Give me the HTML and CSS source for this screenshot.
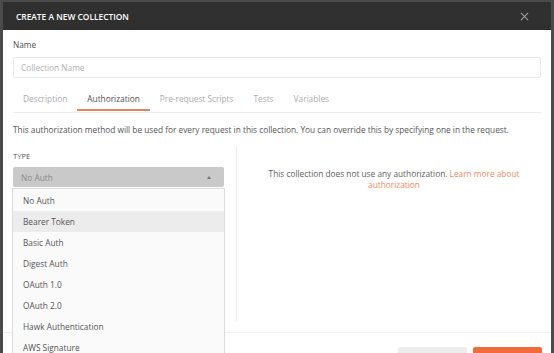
FILE: index.html
```html
<!DOCTYPE html>
<html lang="en">
<head>
    <meta charset="UTF-8">
    <title>Create a new collection</title>
    <link rel="stylesheet" href="styles.css">
</head>
<body>
    <div class="modal">
        <div class="modal-header">
            <div class="modal-title">CREATE A NEW COLLECTION</div>
            <svg class="modal-close" width="9" height="9" viewBox="0 0 10 10">
                <path d="M1 1 L9 9 M9 1 L1 9" stroke="#9a9a9a" stroke-width="1.3"/>
            </svg>
        </div>

        <div class="modal-body">
            <div class="field-label">Name</div>
            <div class="text-input">Collection Name</div>

            <div class="tabs">
                <div class="tab">Description</div>
                <div class="tab active">Authorization</div>
                <div class="tab">Pre-request Scripts</div>
                <div class="tab">Tests</div>
                <div class="tab">Variables</div>
            </div>

            <div class="auth-help">This authorization method will be used for every request in this collection. You can override this by specifying one in the request.</div>

            <div class="auth-panel">
                <div class="auth-type">
                    <div class="type-label">TYPE</div>
                    <div class="select">
                        <span>No Auth</span>
                        <span class="caret"></span>
                    </div>
                    <ul class="select-menu">
                        <li>No Auth</li>
                        <li class="hover">Bearer Token</li>
                        <li>Basic Auth</li>
                        <li>Digest Auth</li>
                        <li>OAuth 1.0</li>
                        <li>OAuth 2.0</li>
                        <li>Hawk Authentication</li>
                        <li>AWS Signature</li>
                    </ul>
                </div>
                <div class="auth-info">
                    This collection does not use any authorization. <a href="#">Learn more about authorization</a>
                </div>
            </div>
        </div>

        <div class="modal-footer">
            <div class="btn btn-secondary">Cancel</div>
            <div class="btn btn-primary">Create</div>
        </div>
    </div>
</body>
</html>
```

FILE: styles.css
```css
body {
    margin: 0;
    padding: 0;
    background: #4b4b4b;
    font-family: 'Open Sans', 'Liberation Sans', sans-serif;
    font-size: 8.3px;
    color: #505050;
    overflow: hidden;
    height: 353px;
}

.modal {
    margin: 2px 3px 0 3px;
    background: #fff;
    height: 351px;
    display: flex;
    flex-direction: column;
    overflow: hidden;
}

.modal-header {
    height: 28px;
    background: #303030;
    display: flex;
    align-items: center;
    justify-content: space-between;
    padding: 0 22px 0 13px;
    flex-shrink: 0;
}

.modal-title {
    color: #fff;
    font-size: 8.4px;
    font-weight: 600;
}

.modal-close {
    display: block;
}

.modal-body {
    padding: 0 10px;
    flex: 1;
    min-height: 0;
    display: flex;
    flex-direction: column;
}

.field-label {
    margin-top: 9px;
    line-height: 12px;
    color: #505050;
}

.text-input {
    margin-top: 6px;
    height: 19px;
    border: 1px solid #e8e8e8;
    border-radius: 2px;
    padding-left: 7px;
    line-height: 19px;
    color: #b0b0b0;
}

.tabs {
    margin-top: 8px;
    display: flex;
    height: 26px;
    border-bottom: 1px solid #ededed;
}

.tab {
    padding: 0 10px;
    line-height: 26px;
    color: #ababab;
    position: relative;
}

.tab.active {
    color: #505050;
}

.tab.active::after {
    content: '';
    position: absolute;
    left: 0;
    right: 0;
    bottom: 1px;
    height: 2px;
    background: #e0855f;
}

.auth-help {
    margin-top: 10px;
    line-height: 13px;
    color: #555;
}

.auth-panel {
    display: flex;
    margin-top: 10px;
    height: 175px;
}

.auth-type {
    width: 223px;
    position: relative;
    padding-top: 4px;
}

.type-label {
    font-size: 7.6px;
    line-height: 12px;
    color: #555;
}

.select {
    margin-top: 5px;
    width: 211px;
    height: 20px;
    background: #c9c9c9;
    border-radius: 2px;
    display: flex;
    align-items: center;
    justify-content: space-between;
    padding: 0 10px 0 8px;
    box-sizing: border-box;
    color: #8a8a8a;
}

.caret {
    width: 0;
    height: 0;
    border-left: 2.5px solid transparent;
    border-right: 2.5px solid transparent;
    border-bottom: 3px solid #777;
    margin-right: 3px;
}

.select-menu {
    position: absolute;
    left: -1px;
    top: 42px;
    width: 213px;
    margin: 0;
    padding: 1px 0 0 0;
    list-style: none;
    background: #fafafa;
    border: 1px solid #dcdcdc;
    box-sizing: border-box;
    height: 200px;
    z-index: 2;
}

.select-menu li {
    height: 21px;
    line-height: 21px;
    padding-left: 10px;
    color: #555;
}

.select-menu li.hover {
    background: #ececec;
}

.auth-info {
    flex: 1;
    border-left: 1px solid #ececec;
    text-align: center;
    padding: 22px 12px 0 22px;
    line-height: 11px;
    color: #606060;
}

.auth-info a {
    color: #ec8a5e;
    text-decoration: none;
}

.modal-footer {
    border-top: 1px solid #f0f0f0;
    height: 21px;
    box-sizing: border-box;
    display: flex;
    justify-content: flex-end;
    align-items: flex-start;
    gap: 6px;
    padding: 14px 9px 0 0;
    flex-shrink: 0;
}

.btn {
    width: 69px;
    height: 24px;
    flex-shrink: 0;
    border-radius: 2px;
    line-height: 24px;
    text-align: center;
    font-size: 8.4px;
}

.btn-secondary {
    background: #ececec;
    color: #505050;
}

.btn-primary {
    background: #f26b3a;
    color: #fff;
}
```
